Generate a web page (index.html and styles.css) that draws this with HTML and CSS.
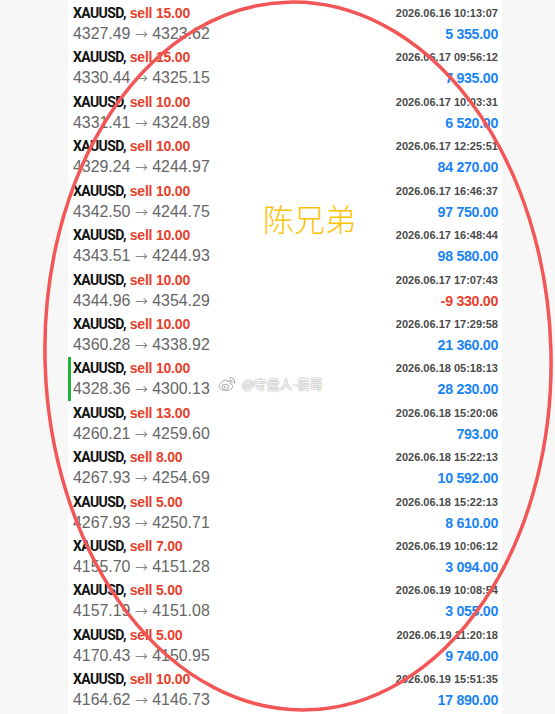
FILE: index.html
```html
<!DOCTYPE html>
<html lang="zh-CN">
<head>
  <meta charset="UTF-8" />
  <meta name="viewport" content="width=device-width, initial-scale=1.0"/>
  <title>XAUUSD 历史订单</title>
  <link rel="stylesheet" href="styles.css">
</head>
<body>

  <div class="page">
    <div class="list">

      <div class="row">
        <div class="left">
          <div class="title"><span class="sym">XAUUSD,</span> <span class="sell">sell 15.00</span></div>
          <div class="price">4327.49 <span class="arrow">→</span> 4323.62</div>
        </div>
        <div class="right">
          <div class="date">2026.06.16 10:13:07</div>
          <div class="profit">5 355.00</div>
        </div>
      </div>

      <div class="row">
        <div class="left">
          <div class="title"><span class="sym">XAUUSD,</span> <span class="sell">sell 15.00</span></div>
          <div class="price">4330.44 <span class="arrow">→</span> 4325.15</div>
        </div>
        <div class="right">
          <div class="date">2026.06.17 09:56:12</div>
          <div class="profit">7 935.00</div>
        </div>
      </div>

      <div class="row">
        <div class="left">
          <div class="title"><span class="sym">XAUUSD,</span> <span class="sell">sell 10.00</span></div>
          <div class="price">4331.41 <span class="arrow">→</span> 4324.89</div>
        </div>
        <div class="right">
          <div class="date">2026.06.17 10:03:31</div>
          <div class="profit">6 520.00</div>
        </div>
      </div>

      <div class="row">
        <div class="left">
          <div class="title"><span class="sym">XAUUSD,</span> <span class="sell">sell 10.00</span></div>
          <div class="price">4329.24 <span class="arrow">→</span> 4244.97</div>
        </div>
        <div class="right">
          <div class="date">2026.06.17 12:25:51</div>
          <div class="profit">84 270.00</div>
        </div>
      </div>

      <div class="row">
        <div class="left">
          <div class="title"><span class="sym">XAUUSD,</span> <span class="sell">sell 10.00</span></div>
          <div class="price">4342.50 <span class="arrow">→</span> 4244.75</div>
        </div>
        <div class="right">
          <div class="date">2026.06.17 16:46:37</div>
          <div class="profit">97 750.00</div>
        </div>
      </div>

      <div class="row">
        <div class="left">
          <div class="title"><span class="sym">XAUUSD,</span> <span class="sell">sell 10.00</span></div>
          <div class="price">4343.51 <span class="arrow">→</span> 4244.93</div>
        </div>
        <div class="right">
          <div class="date">2026.06.17 16:48:44</div>
          <div class="profit">98 580.00</div>
        </div>
      </div>

      <div class="row">
        <div class="left">
          <div class="title"><span class="sym">XAUUSD,</span> <span class="sell">sell 10.00</span></div>
          <div class="price">4344.96 <span class="arrow">→</span> 4354.29</div>
        </div>
        <div class="right">
          <div class="date">2026.06.17 17:07:43</div>
          <div class="profit loss">-9 330.00</div>
        </div>
      </div>

      <div class="row">
        <div class="left">
          <div class="title"><span class="sym">XAUUSD,</span> <span class="sell">sell 10.00</span></div>
          <div class="price">4360.28 <span class="arrow">→</span> 4338.92</div>
        </div>
        <div class="right">
          <div class="date">2026.06.17 17:29:58</div>
          <div class="profit">21 360.00</div>
        </div>
      </div>

      <div class="row active">
        <div class="left">
          <div class="title"><span class="sym">XAUUSD,</span> <span class="sell">sell 10.00</span></div>
          <div class="price">4328.36 <span class="arrow">→</span> 4300.13</div>
        </div>
        <div class="right">
          <div class="date">2026.06.18 05:18:13</div>
          <div class="profit">28 230.00</div>
        </div>
      </div>

      <div class="row">
        <div class="left">
          <div class="title"><span class="sym">XAUUSD,</span> <span class="sell">sell 13.00</span></div>
          <div class="price">4260.21 <span class="arrow">→</span> 4259.60</div>
        </div>
        <div class="right">
          <div class="date">2026.06.18 15:20:06</div>
          <div class="profit">793.00</div>
        </div>
      </div>

      <div class="row">
        <div class="left">
          <div class="title"><span class="sym">XAUUSD,</span> <span class="sell">sell 8.00</span></div>
          <div class="price">4267.93 <span class="arrow">→</span> 4254.69</div>
        </div>
        <div class="right">
          <div class="date">2026.06.18 15:22:13</div>
          <div class="profit">10 592.00</div>
        </div>
      </div>

      <div class="row">
        <div class="left">
          <div class="title"><span class="sym">XAUUSD,</span> <span class="sell">sell 5.00</span></div>
          <div class="price">4267.93 <span class="arrow">→</span> 4250.71</div>
        </div>
        <div class="right">
          <div class="date">2026.06.18 15:22:13</div>
          <div class="profit">8 610.00</div>
        </div>
      </div>

      <div class="row">
        <div class="left">
          <div class="title"><span class="sym">XAUUSD,</span> <span class="sell">sell 7.00</span></div>
          <div class="price">4155.70 <span class="arrow">→</span> 4151.28</div>
        </div>
        <div class="right">
          <div class="date">2026.06.19 10:06:12</div>
          <div class="profit">3 094.00</div>
        </div>
      </div>

      <div class="row">
        <div class="left">
          <div class="title"><span class="sym">XAUUSD,</span> <span class="sell">sell 5.00</span></div>
          <div class="price">4157.19 <span class="arrow">→</span> 4151.08</div>
        </div>
        <div class="right">
          <div class="date">2026.06.19 10:08:54</div>
          <div class="profit">3 055.00</div>
        </div>
      </div>

      <div class="row">
        <div class="left">
          <div class="title"><span class="sym">XAUUSD,</span> <span class="sell">sell 5.00</span></div>
          <div class="price">4170.43 <span class="arrow">→</span> 4150.95</div>
        </div>
        <div class="right">
          <div class="date">2026.06.19 11:20:18</div>
          <div class="profit">9 740.00</div>
        </div>
      </div>

      <div class="row">
        <div class="left">
          <div class="title"><span class="sym">XAUUSD,</span> <span class="sell">sell 10.00</span></div>
          <div class="price">4164.62 <span class="arrow">→</span> 4146.73</div>
        </div>
        <div class="right">
          <div class="date">2026.06.19 15:51:35</div>
          <div class="profit">17 890.00</div>
        </div>
      </div>

    </div>

    <!-- annotations drawn over the screenshot -->
    <div class="note">陈兄弟</div>

    <div class="watermark">
      <svg width="18" height="16" viewBox="0 0 18 16">
        <path d="M7.2 4.2c-2.6 0.4-6 3.4-6 6.2 0 2.5 3 4.2 6.4 4.2 3.9 0 7-2 7-4.4 0-1.6-1.5-2.2-2.3-2.4 0.5-1.3 0.2-2.6-1.5-2.5-0.8 0-1.6 0.4-1.6 0.4 0.3-1.2-0.2-1.8-2-1.5z" fill="#fff" stroke="#aaa" stroke-width="1"/>
        <ellipse cx="7.4" cy="10.8" rx="3.4" ry="2.5" fill="none" stroke="#aaa" stroke-width="1"/>
        <circle cx="6.8" cy="11" r="0.9" fill="#aaa"/>
        <path d="M11.6 1.6a4.6 4.6 0 0 1 5 5.4" fill="none" stroke="#aaa" stroke-width="1.1" stroke-linecap="round"/>
        <path d="M11.8 4.1a2.1 2.1 0 0 1 2.3 2.5" fill="none" stroke="#aaa" stroke-width="1.1" stroke-linecap="round"/>
      </svg>
      <span>@守盘人-蓓哥</span>
    </div>

    <svg class="circle" width="555" height="714" viewBox="0 0 555 714">
      <ellipse cx="298" cy="356" rx="253" ry="354" transform="rotate(-1.6 298 356)" fill="none" stroke="#f35656" stroke-width="3.5"/>
    </svg>
  </div>

</body>
</html>
```

FILE: styles.css
```css
* { box-sizing: border-box; }

body {
  margin: 0;
  padding: 0;
  background: #f7f7f7;
  font-family: 'Liberation Sans', Arial, sans-serif;
  color: #111;
}

.page {
  position: relative;
  width: 555px;
  height: 714px;
  overflow: hidden;
}

.list {
  width: 434px;
  margin-left: 68px;
  background: #ffffff;
  min-height: 714px;
}

.row {
  position: relative;
  display: flex;
  justify-content: space-between;
  height: 44.43px;
  padding: 2px 4px 0 5px;
}

.row.active::before {
  content: '';
  position: absolute;
  left: 0;
  top: 2px;
  width: 3px;
  height: 44px;
  background: #1fb33c;
}

.title {
  height: 22px;
  line-height: 22px;
  font-size: 14px;
  font-weight: bold;
  white-space: nowrap;
}

.sym {
  font-family: Roboto, 'Liberation Sans', sans-serif;
  letter-spacing: -0.6px;
  color: #111;
}

.sell {
  color: #e8402c;
  letter-spacing: -0.2px;
}

.price {
  line-height: 20.43px;
  font-size: 15.9px;
  color: #666;
  white-space: nowrap;
}

.arrow {
  font-family: 'DejaVu Sans', sans-serif;
  font-size: 15.5px;
  font-weight: 300;
  color: #6e6e6e;
}

.right {
  text-align: right;
}

.date {
  height: 22px;
  line-height: 22px;
  font-size: 11px;
  font-weight: bold;
  color: #4a4a4a;
}

.profit {
  line-height: 20.43px;
  font-size: 14.2px;
  font-weight: bold;
  color: #1a84f5;
  letter-spacing: -0.3px;
}

.profit.loss {
  color: #e8402c;
}

.note {
  position: absolute;
  left: 263px;
  top: 199px;
  font-family: 'Noto Sans CJK SC', sans-serif;
  font-size: 31px;
  font-weight: 300;
  line-height: 38px;
  color: #fcc30a;
}

.watermark {
  position: absolute;
  left: 218px;
  top: 374px;
  display: flex;
  align-items: center;
  gap: 6px;
  font-family: 'Noto Sans CJK SC', sans-serif;
  font-size: 12.8px;
  color: #fdfdfd;
  text-shadow: 0 0 1px #8a8a8a, 0 0 2px #b0b0b0;
}

.circle {
  position: absolute;
  left: 0;
  top: 0;
  pointer-events: none;
}
```
